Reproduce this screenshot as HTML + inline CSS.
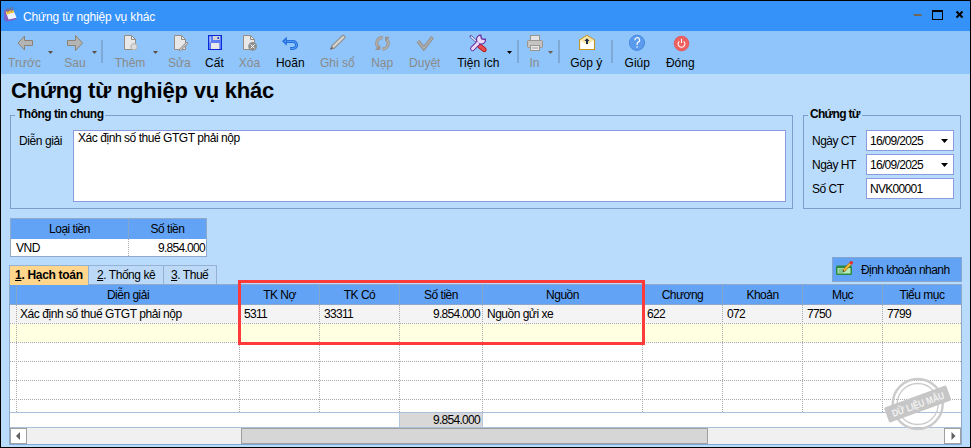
<!DOCTYPE html>
<html><head><meta charset="utf-8">
<style>
*{box-sizing:border-box;margin:0;padding:0}
html,body{width:971px;height:448px;overflow:hidden;background:#000}
body{position:relative;font-family:"Liberation Sans",sans-serif;font-size:12px;line-height:14px;color:#000}
div,svg{position:absolute}
.a{white-space:nowrap}
.gb{border:1px solid #809CCC}
.tx{background:#fff;border:1px solid #8A9BE0}
.vl{width:1px;background:#85A5CC}
.dv{width:1px;border-left:1px dotted #A8A8A8}
.dh{height:1px;border-top:1px dotted #A8A8A8}
u{text-decoration:underline}
</style></head><body>
<div style="left:0px;top:0px;width:971px;height:448px;background:#000;"></div>
<div style="left:1px;top:1px;width:969px;height:446px;background:#B9DCFC;"></div>
<div style="left:1px;top:1px;width:969px;height:30px;background:#3592F8;"></div>
<div style="left:1px;top:31px;width:969px;height:43px;background:#8FC5FB;"></div>
<div class="a" style="left:23px;top:10px;color:#fff;letter-spacing:-0.15px;">Chứng từ nghiệp vụ khác</div>
<div class="a" style="left:-15.5px;top:56px;color:#8A8A8A;width:80px;text-align:center;">Trước</div>
<div class="a" style="left:35px;top:56px;color:#8A8A8A;width:80px;text-align:center;">Sau</div>
<div class="a" style="left:90px;top:56px;color:#8A8A8A;width:80px;text-align:center;">Thêm</div>
<div class="a" style="left:139.3px;top:56px;color:#8A8A8A;width:80px;text-align:center;">Sửa</div>
<div class="a" style="left:174.4px;top:56px;color:#000;width:80px;text-align:center;">Cất</div>
<div class="a" style="left:209.4px;top:56px;color:#8A8A8A;width:80px;text-align:center;">Xóa</div>
<div class="a" style="left:250.3px;top:56px;color:#000;width:80px;text-align:center;">Hoãn</div>
<div class="a" style="left:297.3px;top:56px;color:#8A8A8A;width:80px;text-align:center;">Ghi sổ</div>
<div class="a" style="left:342.2px;top:56px;color:#8A8A8A;width:80px;text-align:center;">Nạp</div>
<div class="a" style="left:384.8px;top:56px;color:#8A8A8A;width:80px;text-align:center;">Duyệt</div>
<div class="a" style="left:438.3px;top:56px;color:#000;width:80px;text-align:center;">Tiện ích</div>
<div class="a" style="left:494.5px;top:56px;color:#8A8A8A;width:80px;text-align:center;">In</div>
<div class="a" style="left:546.3px;top:56px;color:#000;width:80px;text-align:center;">Góp ý</div>
<div class="a" style="left:597.3px;top:56px;color:#000;width:80px;text-align:center;">Giúp</div>
<div class="a" style="left:640.3px;top:56px;color:#000;width:80px;text-align:center;">Đóng</div>
<div class="a" style="left:11px;top:78px;font-size:22px;line-height:25px;font-weight:bold;letter-spacing:-0.2px;">Chứng từ nghiệp vụ khác</div>
<div class="gb" style="left:10px;top:115px;width:783px;height:94px"></div>
<div class="a" style="left:15px;top:107px;font-weight:bold;letter-spacing:-0.5px;background:#B9DCFC;padding:0 2px;">Thông tin chung</div>
<div class="a" style="left:19px;top:134px;letter-spacing:-0.4px;">Diễn giải</div>
<div class="tx" style="left:73px;top:130px;width:713px;height:72px"></div>
<div class="a" style="left:78px;top:131px;letter-spacing:-0.45px;">Xác định số thuế GTGT phải nộp</div>
<div class="gb" style="left:803px;top:115px;width:158px;height:94px"></div>
<div class="a" style="left:808px;top:107px;font-weight:bold;letter-spacing:-0.7px;background:#B9DCFC;padding:0 2px;">Chứng từ</div>
<div class="a" style="left:812px;top:134px;letter-spacing:-0.5px;">Ngày CT</div>
<div class="a" style="left:812px;top:158px;letter-spacing:-0.5px;">Ngày HT</div>
<div class="a" style="left:812px;top:182px;letter-spacing:-0.5px;">Số CT</div>
<div class="tx" style="left:866px;top:130px;width:88px;height:21px"></div>
<div class="tx" style="left:866px;top:154px;width:88px;height:21px"></div>
<div class="tx" style="left:866px;top:178px;width:88px;height:21px"></div>
<div class="a" style="left:870px;top:134px;letter-spacing:-0.7px;">16/09/2025</div>
<div class="a" style="left:870px;top:158px;letter-spacing:-0.7px;">16/09/2025</div>
<div class="a" style="left:870px;top:182px;letter-spacing:-0.7px;">NVK00001</div>
<div style="left:10px;top:218px;width:197px;height:39px;background:#fff;border:1px solid #8FA9CC;"></div>
<div style="left:11px;top:219px;width:195px;height:20px;background:#62A3F6;"></div>
<div class="vl" style="left:128px;top:219px;height:20px"></div>
<div class="dv" style="left:128px;top:239px;height:17px"></div>
<div class="dv" style="left:10px;top:239px;height:17px"></div>
<div class="a" style="left:11px;top:222px;width:117px;text-align:center;letter-spacing:-0.5px;">Loại tiền</div>
<div class="a" style="left:129px;top:222px;width:77px;text-align:center;letter-spacing:-0.5px;">Số tiền</div>
<div class="a" style="left:16px;top:241px;letter-spacing:-0.5px;">VND</div>
<div class="a" style="left:105px;top:241px;width:100px;text-align:right;letter-spacing:-0.7px;">9.854.000</div>
<div style="left:88px;top:265px;width:76px;height:20px;background:#BCDAF8;border:1px solid #95B1D6;"></div>
<div style="left:163px;top:265px;width:54px;height:20px;background:#BCDAF8;border:1px solid #95B1D6;"></div>
<div style="left:9px;top:265px;width:80px;height:20px;background:#FFD68C;border:1px solid #95B1D6;border-bottom:none;"></div>
<div class="a" style="left:15px;top:268px;font-weight:bold;letter-spacing:-0.3px;"><u>1</u>. Hạch toán</div>
<div class="a" style="left:97px;top:268px;letter-spacing:-0.45px;"><u>2</u>. Thống kê</div>
<div class="a" style="left:171px;top:268px;letter-spacing:-0.45px;"><u>3</u>. Thuế</div>
<div style="left:832px;top:257px;width:130px;height:25px;background:#62A3F6;border:1px solid #86A6D0;"></div>
<div class="a" style="left:861px;top:263px;letter-spacing:-0.55px;">Định khoản nhanh</div>
<div style="left:9px;top:284px;width:953px;height:161px;background:#fff;border:1px solid #8FA9CC;"></div>
<div style="left:10px;top:284px;width:78px;height:1px;background:#FFD68C;"></div>
<div style="left:10px;top:285px;width:951px;height:19px;background:#62A3F6;"></div>
<div style="left:10px;top:304px;width:951px;height:1px;background:#8CA8CC;"></div>
<div style="left:10px;top:305px;width:951px;height:18px;background:#F4F4F4;"></div>
<div style="left:10px;top:324px;width:951px;height:18px;background:#FFFFE1;"></div>
<div class="dh" style="left:10px;top:323px;width:951px"></div>
<div class="dh" style="left:10px;top:342px;width:951px"></div>
<div class="dh" style="left:10px;top:361px;width:951px"></div>
<div class="dh" style="left:10px;top:380px;width:951px"></div>
<div class="dh" style="left:10px;top:399px;width:951px"></div>
<div class="vl" style="left:16px;top:285px;height:19px"></div>
<div class="dv" style="left:16px;top:305px;height:107px"></div>
<div class="vl" style="left:239px;top:285px;height:19px"></div>
<div class="dv" style="left:239px;top:305px;height:107px"></div>
<div class="vl" style="left:319px;top:285px;height:19px"></div>
<div class="dv" style="left:319px;top:305px;height:107px"></div>
<div class="vl" style="left:399px;top:285px;height:19px"></div>
<div class="dv" style="left:399px;top:305px;height:107px"></div>
<div class="vl" style="left:482px;top:285px;height:19px"></div>
<div class="dv" style="left:482px;top:305px;height:107px"></div>
<div class="vl" style="left:642px;top:285px;height:19px"></div>
<div class="dv" style="left:642px;top:305px;height:107px"></div>
<div class="vl" style="left:722px;top:285px;height:19px"></div>
<div class="dv" style="left:722px;top:305px;height:107px"></div>
<div class="vl" style="left:802px;top:285px;height:19px"></div>
<div class="dv" style="left:802px;top:305px;height:107px"></div>
<div class="vl" style="left:882px;top:285px;height:19px"></div>
<div class="dv" style="left:882px;top:305px;height:107px"></div>
<div class="a" style="left:17px;top:288px;width:222px;text-align:center;letter-spacing:-0.5px;">Diễn giải</div>
<div class="a" style="left:240px;top:288px;width:79px;text-align:center;letter-spacing:-0.5px;">TK Nợ</div>
<div class="a" style="left:320px;top:288px;width:79px;text-align:center;letter-spacing:-0.5px;">TK Có</div>
<div class="a" style="left:400px;top:288px;width:82px;text-align:center;letter-spacing:-0.5px;">Số tiền</div>
<div class="a" style="left:483px;top:288px;width:159px;text-align:center;letter-spacing:-0.5px;">Nguồn</div>
<div class="a" style="left:643px;top:288px;width:79px;text-align:center;letter-spacing:-0.5px;">Chương</div>
<div class="a" style="left:723px;top:288px;width:79px;text-align:center;letter-spacing:-0.5px;">Khoản</div>
<div class="a" style="left:803px;top:288px;width:79px;text-align:center;letter-spacing:-0.5px;">Mục</div>
<div class="a" style="left:883px;top:288px;width:78px;text-align:center;letter-spacing:-0.5px;">Tiểu mục</div>
<div class="a" style="left:20px;top:307px;letter-spacing:-0.45px;">Xác định số thuế GTGT phải nộp</div>
<div class="a" style="left:244px;top:307px;letter-spacing:-0.7px;">5311</div>
<div class="a" style="left:324px;top:307px;letter-spacing:-0.7px;">33311</div>
<div class="a" style="left:380px;top:307px;width:100px;text-align:right;letter-spacing:-0.7px;">9.854.000</div>
<div class="a" style="left:487px;top:307px;letter-spacing:-0.5px;">Nguồn gửi xe</div>
<div class="a" style="left:647px;top:307px;letter-spacing:-0.7px;">622</div>
<div class="a" style="left:727px;top:307px;letter-spacing:-0.7px;">072</div>
<div class="a" style="left:807px;top:307px;letter-spacing:-0.7px;">7750</div>
<div class="a" style="left:887px;top:307px;letter-spacing:-0.7px;">7799</div>
<div style="left:10px;top:412px;width:951px;height:1px;background:#A9BFDA;"></div>
<div style="left:10px;top:427px;width:951px;height:1px;background:#A9BFDA;"></div>
<div style="left:399px;top:413px;width:84px;height:14px;background:#D8D8D8;border-left:1px solid #B5C8E0;border-right:1px solid #B5C8E0;"></div>
<div class="a" style="left:380px;top:413px;width:100px;text-align:right;letter-spacing:-0.7px;">9.854.000</div>
<div style="left:10px;top:428px;width:951px;height:16px;background:#F0F0F0;"></div>
<div style="left:10px;top:428px;width:17px;height:16px;background:#fff;border:1px solid #A0A0A0;"></div>
<div style="left:944px;top:428px;width:17px;height:16px;background:#fff;border:1px solid #A0A0A0;"></div>
<div style="left:241px;top:428px;width:467px;height:16px;background:#D6D6D6;border:1px solid #A0A0A0;"></div>
<div style="left:10px;top:444px;width:951px;height:1px;background:#7FA7D8;"></div>
<svg width="971" height="448" style="left:0;top:0">
<path d="M941 139 h7 l-3.5 4 z" fill="#000"/>
<path d="M941 163 h7 l-3.5 4 z" fill="#000"/>
<path d="M16 436 l4 -4 v8 z" fill="#606060"/>
<path d="M955.5 436 l-4 -4 v8 z" fill="#606060"/>
</svg>
<svg width="971" height="448" viewBox="0 0 971 448" style="left:0;top:0">
<!-- title icon -->
<g>
<path d="M4 10 L12.5 9 L16.5 19.5 L6.5 21.5 L4.2 20 Z" fill="#7C5FC4"/>
<path d="M5.8 12.2 L13.5 10.6 L16.6 17.8 L8.6 19.6 Z" fill="#EEF4FF"/>
<path d="M5.6 11.6 L13 9.8 L14.3 12.6 L6.6 14.4 Z" fill="#F2C440"/>
<ellipse cx="7.8" cy="9.8" rx="1.2" ry="2" fill="none" stroke="#707080" stroke-width="0.9"/>
<ellipse cx="11.6" cy="9.2" rx="1.2" ry="2" fill="none" stroke="#707080" stroke-width="0.9"/>
</g>
<!-- window buttons -->
<rect x="914" y="14" width="7.5" height="2" fill="#716656"/>
<rect x="932.5" y="10.5" width="10" height="9" fill="none" stroke="#000" stroke-width="1"/>
<rect x="932" y="10" width="11" height="2" fill="#000"/>
<path d="M956.5 11.5 L962.5 17.5 M962.5 11.5 L956.5 17.5" stroke="#000" stroke-width="2"/>

<!-- toolbar dropdowns -->
<path d="M48 51 h5 l-2.5 3 z" fill="#5A5048"/>
<path d="M92 51 h5 l-2.5 3 z" fill="#5A5048"/>
<path d="M153 51 h5 l-2.5 3 z" fill="#5A5048"/>
<path d="M507 51 h5 l-2.5 3 z" fill="#000"/>
<path d="M548 51 h5 l-2.5 3 z" fill="#6A6058"/>
<!-- separators -->
<rect x="101" y="40" width="2" height="23" fill="#7EA8D6"/>
<rect x="517" y="40" width="2" height="23" fill="#7EA8D6"/>
<rect x="558" y="40" width="2" height="23" fill="#7EA8D6"/>
<rect x="611" y="40" width="2" height="23" fill="#7EA8D6"/>

<!-- back arrow -->
<path d="M18 43 L24.5 36 V40.5 H32.5 V45.5 H24.5 V50 Z" fill="#B4B4B4" stroke="#8C8276" stroke-width="1" stroke-linejoin="miter"/>
<!-- fwd arrow -->
<path d="M82.5 43 L75.5 35.5 V40.5 H67.5 V45.5 H75.5 V50.5 Z" fill="#B4B4B4" stroke="#8C8276" stroke-width="1"/>
<!-- Them doc -->
<path d="M124.5 35.5 H131.5 L135.5 39.5 V49.5 H124.5 Z" fill="#E8E8E8" stroke="#958E86"/>
<path d="M131.5 35.5 V39.5 H135.5" fill="none" stroke="#958E86"/>
<circle cx="134" cy="46.8" r="3.2" fill="#DCDCDC" stroke="#B0B0B0"/>
<!-- Sua doc -->
<path d="M174.5 35.5 H181.5 L185.5 39.5 V49.5 H174.5 Z" fill="#E8E8E8" stroke="#958E86"/>
<path d="M181.5 35.5 V39.5 H185.5" fill="none" stroke="#958E86"/>
<path d="M180 50 L187 43" stroke="#9A9A9A" stroke-width="2.5" stroke-linecap="round"/>
<path d="M180 50 L187 43" stroke="#D0D0D0" stroke-width="1"/>
<!-- floppy -->
<rect x="208.5" y="35.5" width="13" height="14" fill="#5B7CF4" stroke="#0B2AD6"/>
<rect x="213" y="36" width="7" height="4" fill="#D4D4D4"/>
<rect x="217.5" y="37" width="1.6" height="2" fill="#1A3AE0"/>
<rect x="211" y="43" width="8.3" height="6" fill="#E8E8E8"/>
<rect x="209.5" y="36.5" width="1.5" height="6" fill="#A8B8FF"/>
<!-- Xoa doc -->
<path d="M243.5 35.5 H250.5 L254.5 39.5 V49.5 H243.5 Z" fill="#E8E8E8" stroke="#958E86"/>
<path d="M250.5 35.5 V39.5 H254.5" fill="none" stroke="#958E86"/>
<circle cx="252.6" cy="46.4" r="4.4" fill="#8E8E8E"/>
<path d="M250.6 44.4 L254.6 48.4 M254.6 44.4 L250.6 48.4" stroke="#fff" stroke-width="1"/>
<!-- undo -->
<path d="M285.5 41.4 H293 A3.6 3.6 0 0 1 293 48.6 H290.2" fill="none" stroke="#1F6EDF" stroke-width="3"/>
<path d="M285.5 41.4 H293 A3.6 3.6 0 0 1 293 48.6 H290.8" fill="none" stroke="#5C9EF2" stroke-width="1"/>
<path d="M282 41.3 L286.8 36.8 V45.8 Z" fill="#1F6EDF"/>
<path d="M284.2 41.3 L285.9 39.5 V43.1 Z" fill="#5C9EF2"/>
<!-- pencil -->
<path d="M333.2 46.8 L343.3 37.2" stroke="#8E8A86" stroke-width="4.4" stroke-linecap="round"/>
<path d="M333.2 46.8 L343.3 37.2" stroke="#D2D2D2" stroke-width="2.4" stroke-linecap="round"/>
<path d="M330.3 49.6 L331.4 45.6 L334.4 48.4 Z" fill="#8A8682"/>
<path d="M330.3 49.6 L331 47.6 L332.3 48.9 Z" fill="#505050"/>
<!-- refresh -->
<path d="M383 37.55 H382.5 A5.75 5.75 0 0 0 378.43 47.37" fill="none" stroke="#9A948E" stroke-width="3"/>
<path d="M383 37.55 H382.5 A5.75 5.75 0 0 0 378.43 47.37" fill="none" stroke="#B6B2AE" stroke-width="1.3"/>
<path d="M374.8 50 L380.3 50 L380.3 44.8 Z" fill="#9A948E"/>
<path d="M382 49.05 H382.5 A5.75 5.75 0 0 0 386.57 39.23" fill="none" stroke="#9A948E" stroke-width="3"/>
<path d="M382 49.05 H382.5 A5.75 5.75 0 0 0 386.57 39.23" fill="none" stroke="#B6B2AE" stroke-width="1.3"/>
<path d="M389.8 36.8 L385 36.8 L385 41.8 Z" fill="#9A948E"/>
<!-- check -->
<path d="M418 41 L423.8 48.4 L432.6 37" fill="none" stroke="#8E8A86" stroke-width="3.6" stroke-linejoin="miter"/>
<path d="M418 41 L423.8 48.4 L432.6 37" fill="none" stroke="#AEAEAE" stroke-width="1.8"/>
<!-- tools -->
<defs>
<mask id="wm"><rect x="460" y="30" width="40" height="30" fill="#fff"/><circle cx="483.8" cy="36.4" r="2.9" fill="#000"/></mask>
<clipPath id="wc"><circle cx="481" cy="39.6" r="4.6"/></clipPath>
</defs>
<path d="M470.8 36.3 L476.2 41.4" stroke="#5858A8" stroke-width="2.6" stroke-linecap="round"/>
<path d="M471 36.5 L475.8 41" stroke="#EAF2FF" stroke-width="1.1"/>
<path d="M479.6 46 L484.2 49.6" stroke="#C01818" stroke-width="5" stroke-linecap="round"/>
<path d="M479.6 46 L484.2 49.6" stroke="#E65050" stroke-width="3" stroke-linecap="round"/>
<path d="M472.6 48.6 L478 43.2" stroke="#6A2A9A" stroke-width="5" stroke-linecap="round"/>
<path d="M472.6 48.6 L478 43.2" stroke="#EADCF8" stroke-width="3" stroke-linecap="round"/>
<g mask="url(#wm)">
<circle cx="481" cy="39.6" r="4.5" fill="#EADCF8" stroke="#6A2A9A" stroke-width="1.2"/>
</g>
<g clip-path="url(#wc)"><circle cx="483.8" cy="36.4" r="2.9" fill="none" stroke="#6A2A9A" stroke-width="1.2"/></g>
<path d="M476.5 42.5 L478.5 44.5" stroke="#EADCF8" stroke-width="2.2"/>
<!-- printer -->
<rect x="530.5" y="35.5" width="9" height="5" fill="#E4E4E4" stroke="#9A958E"/>
<rect x="527.5" y="40.5" width="15" height="7" rx="1" fill="#C4C4C4" stroke="#9A958E"/>
<rect x="530.5" y="45.5" width="9" height="5" fill="#E8E8E8" stroke="#9A958E"/>
<path d="M532 48 h6" stroke="#A0A0A0"/>
<!-- envelope -->
<path d="M579.6 40 L587 35.4 L594.5 40 V49.5 H579.6 Z" fill="#fff" stroke="#C8961E" stroke-width="1.1"/>
<path d="M580.2 40.2 L587 36 L593.9 40.2 L587 44.8 Z" fill="#FBE7A4"/>
<path d="M587 38.2 L584.4 40.9 H586 V43.9 H588 V40.9 H589.6 Z" fill="#1E2A48"/>
<!-- help -->
<circle cx="637" cy="42.8" r="7.6" fill="#5A9BEE" stroke="#3F7FD6" stroke-width="0.8"/>
<path d="M635 40.2 A2.3 2.3 0 1 1 638.2 42.1 Q637 42.9 637 44.9" fill="none" stroke="#fff" stroke-width="1.15"/>
<rect x="636.4" y="46.3" width="1.3" height="1.3" fill="#fff"/>
<!-- power -->
<circle cx="681.5" cy="43.5" r="7.4" fill="#EF6060" stroke="#E04C4C" stroke-width="0.6"/>
<path d="M679.3 41.3 A3.4 3.4 0 1 0 683.7 41.3" fill="none" stroke="#fff" stroke-width="1.1"/>
<path d="M681.5 38.8 V43" stroke="#fff" stroke-width="1.1"/>

<!-- dinh khoan icon -->
<rect x="836" y="265.5" width="16" height="9.5" rx="1.5" fill="#2C8A44"/>
<rect x="837.5" y="268" width="13" height="5.5" fill="#B8EBB8"/>
<rect x="838.5" y="268.5" width="5" height="4.5" fill="#86C890"/>
<path d="M843.5 271 L850.5 263.5" stroke="#B07810" stroke-width="3.2" stroke-linecap="butt"/>
<path d="M843.5 271 L850.5 263.5" stroke="#F4C040" stroke-width="1.8"/>
<circle cx="851.3" cy="262.7" r="1.8" fill="#E03030"/>
<path d="M842.5 272 L843.5 270 L844.8 271.2 Z" fill="#333"/>

<!-- watermark -->
<g fill="none" stroke="#CBCBCB">
<circle cx="917.7" cy="404" r="25" stroke-width="2.4"/>
<circle cx="917.7" cy="404" r="20.5" stroke-width="1.3"/>
</g>
<g transform="rotate(-20 917.7 404)">
<rect x="884.7" y="396" width="66" height="16" rx="1.5" fill="#C6C6C6"/>
<text x="890.5" y="408" font-family="Liberation Sans" font-size="10" font-weight="bold" fill="#F2F2F2" textLength="55" lengthAdjust="spacingAndGlyphs">DỮ LIỆU MẪU</text>
</g>
</svg>

<div style="left:238px;top:280px;width:407px;height:65px;background:transparent;border:3px solid #FF3A3A;"></div>
</body></html>
